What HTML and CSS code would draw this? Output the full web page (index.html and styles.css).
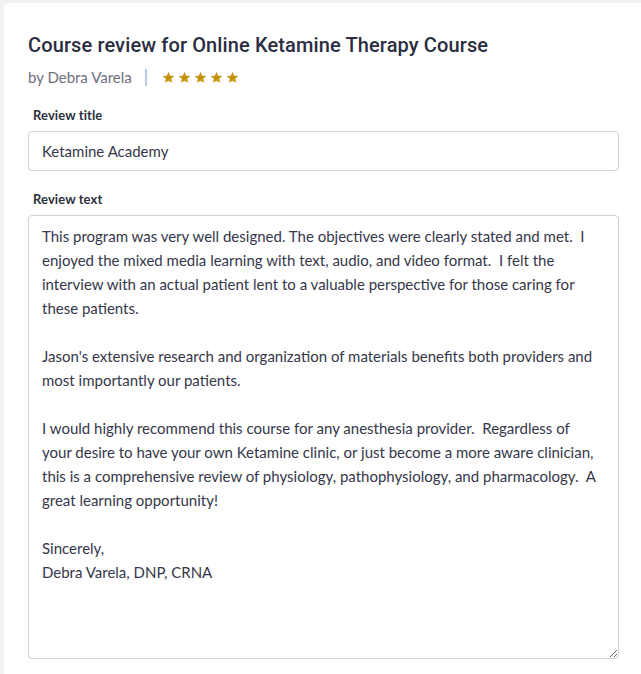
FILE: index.html
```html
<!DOCTYPE html>
<html>
<head>
<meta charset="utf-8">
<link rel="stylesheet" href="styles.css">
</head>
<body>
<div class="card">
  <h1 class="title">Course review for Online Ketamine Therapy Course</h1>
  <div class="meta">
    <span class="author">by Debra Varela</span>
    <span class="sep"></span>
    <span class="stars">
      <svg viewBox="0 0 24 24" class="star"><path d="M12 1.5l3.1 7.2 7.6.6-5.8 5 1.8 7.6L12 17.8 5.3 21.9l1.8-7.6-5.8-5 7.6-.6z"/></svg>
      <svg viewBox="0 0 24 24" class="star"><path d="M12 1.5l3.1 7.2 7.6.6-5.8 5 1.8 7.6L12 17.8 5.3 21.9l1.8-7.6-5.8-5 7.6-.6z"/></svg>
      <svg viewBox="0 0 24 24" class="star"><path d="M12 1.5l3.1 7.2 7.6.6-5.8 5 1.8 7.6L12 17.8 5.3 21.9l1.8-7.6-5.8-5 7.6-.6z"/></svg>
      <svg viewBox="0 0 24 24" class="star"><path d="M12 1.5l3.1 7.2 7.6.6-5.8 5 1.8 7.6L12 17.8 5.3 21.9l1.8-7.6-5.8-5 7.6-.6z"/></svg>
      <svg viewBox="0 0 24 24" class="star"><path d="M12 1.5l3.1 7.2 7.6.6-5.8 5 1.8 7.6L12 17.8 5.3 21.9l1.8-7.6-5.8-5 7.6-.6z"/></svg>
    </span>
  </div>
  <div class="field field-title">
    <label class="label" for="rt">Review title</label>
    <input class="input" id="rt" type="text" value="Ketamine Academy">
  </div>
  <div class="field field-text">
    <label class="label" for="rx">Review text</label>
    <textarea class="textarea" id="rx">This program was very well designed. The objectives were clearly stated and met.  I
enjoyed the mixed media learning with text, audio, and video format.  I felt the
interview with an actual patient lent to a valuable perspective for those caring for
these patients.

Jason's extensive research and organization of materials benefits both providers and
most importantly our patients.

I would highly recommend this course for any anesthesia provider.  Regardless of
your desire to have your own Ketamine clinic, or just become a more aware clinician,
this is a comprehensive review of physiology, pathophysiology, and pharmacology.  A
great learning opportunity!

Sincerely,
Debra Varela, DNP, CRNA</textarea>
  </div>
</div>
</body>
</html>
```
FILE: styles.css
```css
* { box-sizing: border-box; }
html, body { margin: 0; padding: 0; }
body {
  background: #f1f2f4;
  font-family: "Lato", "Noto Sans", sans-serif;
  padding: 3px 0 0 4px;
  height: 674px;
  overflow: hidden;
}
.card {
  background: #fff;
  border-radius: 4px 0 0 0;
  padding: 29px 22px 0 24px;
  height: 700px;
}
.title {
  margin: 0;
  font-family: "Roboto", sans-serif;
  font-weight: 500;
  font-size: 20px;
  line-height: 26px;
  letter-spacing: 0.12px;
  color: #2b2d42;
}
.meta {
  display: flex;
  align-items: center;
  margin-top: 9px;
  height: 20px;
}
.author {
  font-size: 15px;
  color: #6d6f7e;
}
.sep {
  width: 2px;
  height: 17px;
  background: #b3cbe4;
  margin: 0 15px 0 13px;
}
.stars { display: flex; gap: 3px; padding-top: 1px; }
.star { width: 13px; height: 13px; fill: #c8920c; }
.field { display: flex; flex-direction: column; }
.label {
  font-size: 13px;
  font-weight: 700;
  color: #2e3040;
  margin: 0 0 7px 5px;
  line-height: 18px;
  letter-spacing: 0.1px;
}
.field-title .label { margin-top: 19px; }
.field-text .label { margin-top: 19px; }
.input {
  height: 40px;
  width: 100%;
  border: 1px solid #cfd0da;
  border-radius: 4px;
  padding: 0 13px;
  font-family: inherit;
  font-size: 15px;
  color: #35374a;
  outline: none;
}
.textarea {
  width: 100%;
  height: 444px;
  border: 1px solid #cfd0da;
  border-radius: 4px;
  padding: 8px 13px 5px;
  font-family: inherit;
  font-size: 15px;
  line-height: 24px;
  color: #35374a;
  outline: none;
  resize: vertical;
}
```
